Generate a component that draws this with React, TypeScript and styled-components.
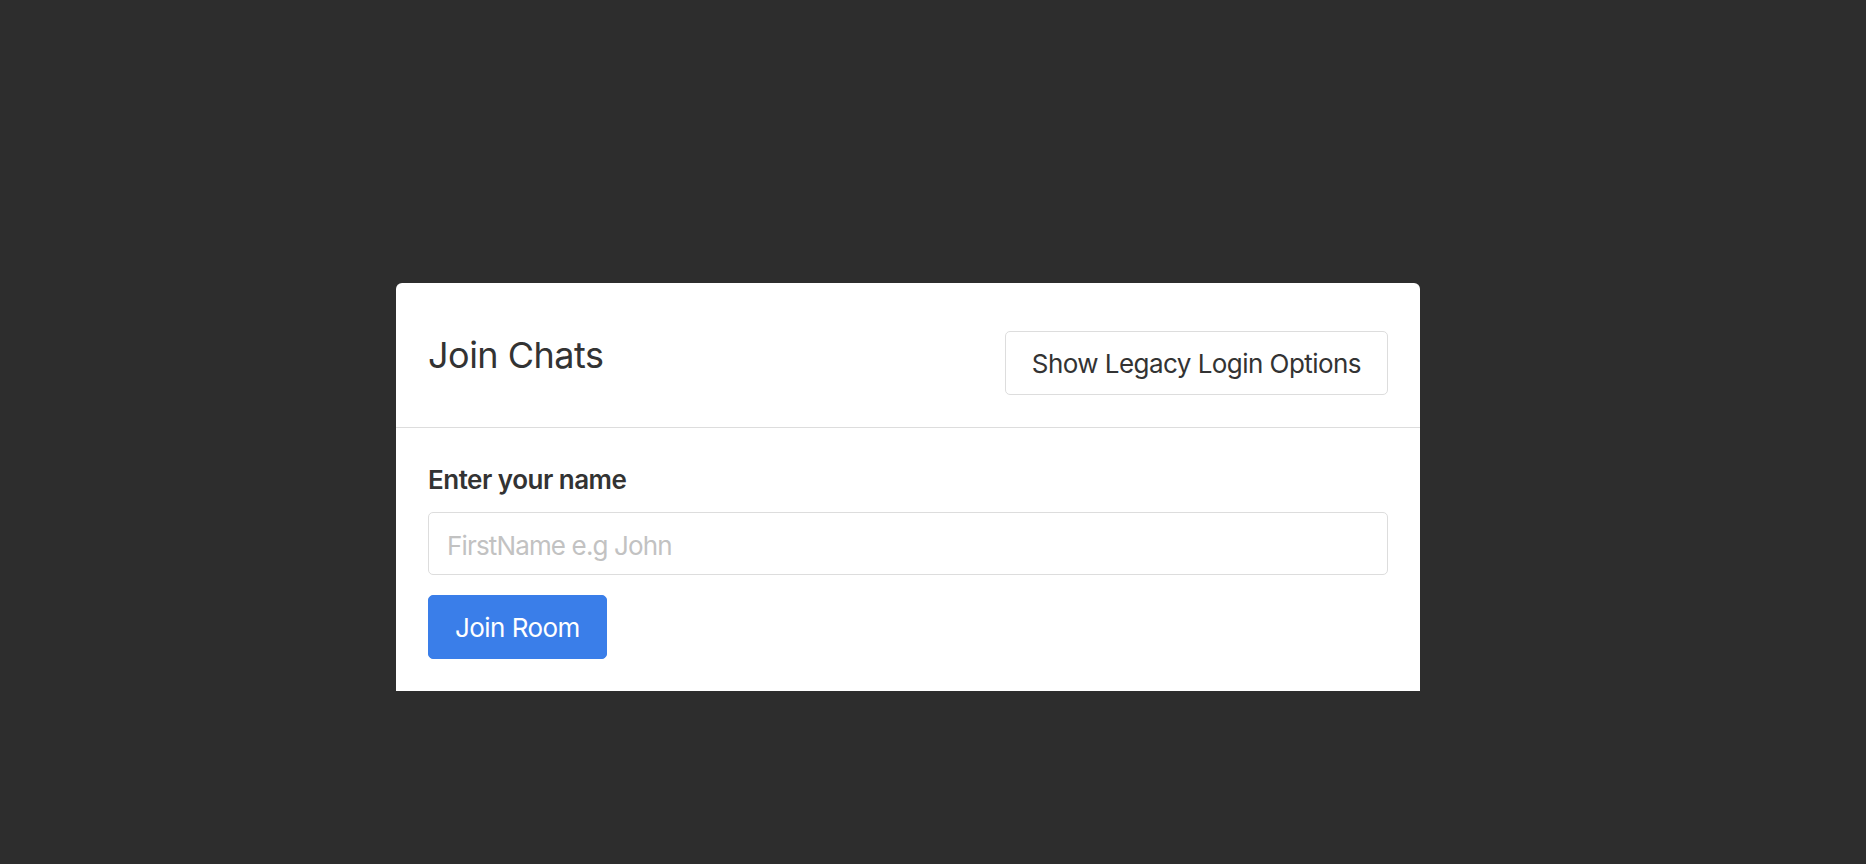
import React from "react";
import styled, { createGlobalStyle } from "styled-components";

const GlobalStyle = createGlobalStyle`
  html, body {
    margin: 0;
    padding: 0;
    background: #2d2d2d;
    font-family: Inter, "Noto Sans", "Liberation Sans", sans-serif;
  }
  * { box-sizing: border-box; }
`;

const Page = styled.div`
  min-height: 864px;
  padding: 283px 0 0 396px;
`;

const Card = styled.section`
  width: 1024px;
  background: #ffffff;
  border-radius: 6px 6px 0 0;
  color: #333333;
`;

const Header = styled.header`
  display: flex;
  justify-content: space-between;
  align-items: center;
  padding: 48px 32px 32px;
  border-bottom: 1px solid #dddddd;
`;

const Title = styled.h3`
  margin: 0 0 14px;
  font-size: 36px;
  line-height: 1.2;
  font-weight: 400;
  letter-spacing: -0.5px;
  color: #333333;
`;

const Button = styled.button<{ $variant?: "outline" | "primary" }>`
  font-family: inherit;
  font-size: 26px;
  line-height: 40px;
  letter-spacing: -0.55px;
  padding: 12px 26px 10px;
  border-radius: 5px;
  cursor: pointer;
  border: 1px solid ${(p) => (p.$variant === "primary" ? "#3a7ee9" : "#dddddd")};
  background: ${(p) => (p.$variant === "primary" ? "#3a7ee9" : "#ffffff")};
  color: ${(p) => (p.$variant === "primary" ? "#ffffff" : "#333333")};
`;

const Body = styled.div`
  display: flex;
  flex-direction: column;
  align-items: flex-start;
  padding: 32px 32px 32px;
`;

const Label = styled.label`
  font-size: 26px;
  line-height: 39px;
  font-weight: 600;
  letter-spacing: -0.5px;
  color: #333333;
  margin-bottom: 13px;
`;

const Input = styled.input`
  width: 100%;
  height: 63px;
  font-family: inherit;
  font-size: 26px;
  letter-spacing: -0.85px;
  padding: 3px 18px 0;
  border: 1px solid #dddddd;
  border-radius: 5px;
  color: #333333;
  margin-bottom: 20px;
  outline: none;
  &::placeholder {
    color: #c2c2c2;
  }
`;

export default function App() {
  return (
    <>
      <GlobalStyle />
      <Page>
        <Card>
          <Header>
            <Title>Join Chats</Title>
            <Button $variant="outline">Show Legacy Login Options</Button>
          </Header>
          <Body>
            <Label htmlFor="name">Enter your name</Label>
            <Input id="name" placeholder="FirstName e.g John" />
            <Button $variant="primary">Join Room</Button>
          </Body>
        </Card>
      </Page>
    </>
  );
}
